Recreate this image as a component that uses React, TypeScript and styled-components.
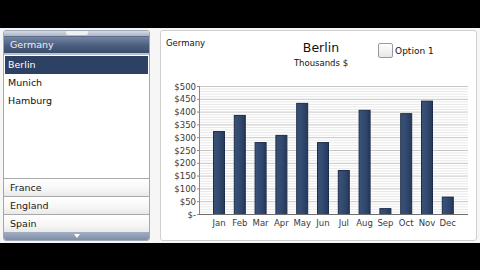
import React, { useState } from 'react'
import styled, { createGlobalStyle } from 'styled-components'

const GlobalStyle = createGlobalStyle`
  html, body {
    margin: 0;
    padding: 0;
    background: #000;
  }
  * {
    box-sizing: border-box;
  }
`

const cities = ['Berlin', 'Munich', 'Hamburg']
const countries = ['France', 'England', 'Spain']
const months = ['Jan', 'Feb', 'Mar', 'Apr', 'May', 'Jun', 'Jul', 'Aug', 'Sep', 'Oct', 'Nov', 'Dec']
const sales = [324, 387, 281, 309, 434, 281, 172, 407, 23, 394, 443, 68]

// chart geometry, in svg units
const axisX = 38
const plotTop = 11
const plotBottom = 139
const plotRight = 307
const firstBar = 58
const barStep = 20.8
const barWidth = 12

const yFor = (v: number) => plotBottom - (v / 500) * (plotBottom - plotTop)

export default function App() {
  const [selected, setSelected] = useState('Berlin')
  const [checked, setChecked] = useState(false)

  return (
    <Page>
      <GlobalStyle />
      <Band />
      <Main>
        <Accordion>
          <TopStrip>
            <Grip />
          </TopStrip>
          <GroupHeader>Germany</GroupHeader>
          <List>
            {cities.map(c => (
              <ListItem key={c} active={c === selected} onClick={() => setSelected(c)}>
                {c}
              </ListItem>
            ))}
          </List>
          {countries.map(c => (
            <CountryRow key={c}>{c}</CountryRow>
          ))}
          <BottomStrip>
            <Arrow />
          </BottomStrip>
        </Accordion>

        <ChartPanel>
          <ChartHeader>
            <Crumb>Germany</Crumb>
            <TitleBlock>
              <Title>{selected}</Title>
              <Subtitle>Thousands $</Subtitle>
            </TitleBlock>
            <OptionLabel onClick={() => setChecked(!checked)}>
              <CheckBox checked={checked} />
              Option 1
            </OptionLabel>
          </ChartHeader>
          <svg width={314} height={160} viewBox="0 0 314 160">
            <defs>
              <linearGradient id="bar" x1="0" x2="1" y1="0" y2="0">
                <stop offset="0" stopColor="#3a5178" />
                <stop offset="0.5" stopColor="#324a70" />
                <stop offset="1" stopColor="#26385a" />
              </linearGradient>
            </defs>
            {Array.from({ length: 51 }, (_, i) => i * 10).map(v => (
              <line
                key={v}
                x1={axisX}
                x2={plotRight}
                y1={yFor(v) + 0.5}
                y2={yFor(v) + 0.5}
                stroke={v % 50 === 0 ? '#c6c6c6' : '#e8e8e8'}
                strokeWidth={1}
              />
            ))}
            {Array.from({ length: 11 }, (_, i) => i * 50).map(v => (
              <g key={v}>
                <line x1={axisX - 2} x2={axisX} y1={yFor(v) + 0.5} y2={yFor(v) + 0.5} stroke="#8a8a8a" />
                <AxisText x={axisX - 3} y={yFor(v) + 3.5} textAnchor="end">
                  {v === 0 ? '$-' : `$${v}`}
                </AxisText>
              </g>
            ))}
            {sales.map((v, i) => {
              const cx = firstBar + i * barStep
              return (
                <g key={months[i]}>
                  <rect
                    x={cx - barWidth / 2 + 0.5}
                    y={yFor(v) + 0.5}
                    width={barWidth - 1}
                    height={plotBottom - yFor(v)}
                    fill="url(#bar)"
                    stroke="#1e2d49"
                    strokeWidth={1}
                  />
                  <AxisText x={cx} y={150.5} textAnchor="middle">
                    {months[i]}
                  </AxisText>
                </g>
              )
            })}
            <line x1={axisX + 0.5} x2={axisX + 0.5} y1={plotTop} y2={plotBottom + 1} stroke="#8a8a8a" />
            <line x1={axisX} x2={plotRight} y1={plotBottom + 0.5} y2={plotBottom + 0.5} stroke="#6e6e6e" />
          </svg>
        </ChartPanel>
      </Main>
      <Band />
    </Page>
  )
}

const Page = styled.div`
  width: 480px;
  height: 270px;
  display: flex;
  flex-direction: column;
  background: #000;
  font-family: 'DejaVu Sans', Verdana, sans-serif;
`

const Band = styled.div`
  flex: 1;
  background: #000;
`

const Main = styled.div`
  height: 215px;
  flex: none;
  display: flex;
  gap: 10px;
  padding: 2px 3px 2px 3px;
  background: #f6f6f6;
`

const Accordion = styled.div`
  width: 147px;
  display: flex;
  flex-direction: column;
  border: 1px solid #9ea8b8;
  border-radius: 3px;
  background: #fff;
  overflow: hidden;
`

const TopStrip = styled.div`
  height: 5px;
  flex: none;
  display: flex;
  justify-content: center;
  background: linear-gradient(#d5dbe4, #aab5c6);
`

const Grip = styled.div`
  width: 22px;
  height: 4px;
  background: #eef0f4;
  border-radius: 0 0 2px 2px;
`

const GroupHeader = styled.div`
  height: 19px;
  flex: none;
  display: flex;
  align-items: center;
  padding-left: 6px;
  font-size: 9.5px;
  color: #eef1f6;
  background: linear-gradient(#7385a2, #4a5d7e 55%, #3b4d6c);
  border-top: 1px solid #5d6e8c;
  border-bottom: 2px solid #b9c1cd;
`

const List = styled.div`
  flex: 1;
  display: flex;
  flex-direction: column;
  padding: 1px 1px 0;
  background: #fff;
`

const ListItem = styled.div<{ active: boolean }>`
  height: 18px;
  display: flex;
  align-items: center;
  padding-left: 3px;
  font-size: 9.5px;
  cursor: pointer;
  color: ${p => (p.active ? '#fff' : '#111')};
  background: ${p => (p.active ? '#2d4164' : 'transparent')};
`

const CountryRow = styled.div`
  height: 18px;
  flex: none;
  display: flex;
  align-items: center;
  padding-left: 6px;
  font-size: 9.5px;
  color: #1a1a1a;
  background: linear-gradient(#ffffff, #f6f6f6 60%, #e9e9e9);
  border-top: 1px solid #a9a9a9;
`

const BottomStrip = styled.div`
  height: 8px;
  flex: none;
  display: flex;
  justify-content: center;
  align-items: center;
  background: linear-gradient(#a3afc2, #7f8ea8);
`

const Arrow = styled.div`
  width: 0;
  height: 0;
  border-left: 3px solid transparent;
  border-right: 3px solid transparent;
  border-top: 4px solid #fff;
`

const ChartPanel = styled.div`
  flex: 1;
  display: flex;
  flex-direction: column;
  border: 1px solid #cfcfcf;
  border-radius: 3px;
  background: #fff;
  overflow: hidden;
`

const ChartHeader = styled.div`
  height: 44px;
  flex: none;
  display: grid;
  grid-template-columns: 1fr auto 1fr;
  padding: 7px 0 0 5px;
`

const Crumb = styled.div`
  font-size: 8.5px;
  color: #111;
`

const TitleBlock = styled.div`
  display: flex;
  flex-direction: column;
  align-items: center;
  padding-top: 2px;
`

const Title = styled.div`
  font-size: 12.5px;
  color: #111;
  line-height: 15px;
`

const Subtitle = styled.div`
  font-size: 8.5px;
  color: #111;
  margin-top: 3px;
`

const OptionLabel = styled.label`
  display: flex;
  align-items: center;
  gap: 2px;
  height: 16px;
  margin-top: 5px;
  padding-left: 30px;
  font-size: 9px;
  color: #111;
  cursor: pointer;
`

const CheckBox = styled.span<{ checked: boolean }>`
  width: 15px;
  height: 15px;
  border: 1px solid #9a9a9a;
  border-radius: 2px;
  background: ${p => (p.checked ? '#2d4164' : 'linear-gradient(#ffffff, #e6e6e6)')};
`

const AxisText = styled.text`
  font-family: 'DejaVu Sans', Verdana, sans-serif;
  font-size: 8.5px;
  fill: #3a3a3a;
`
